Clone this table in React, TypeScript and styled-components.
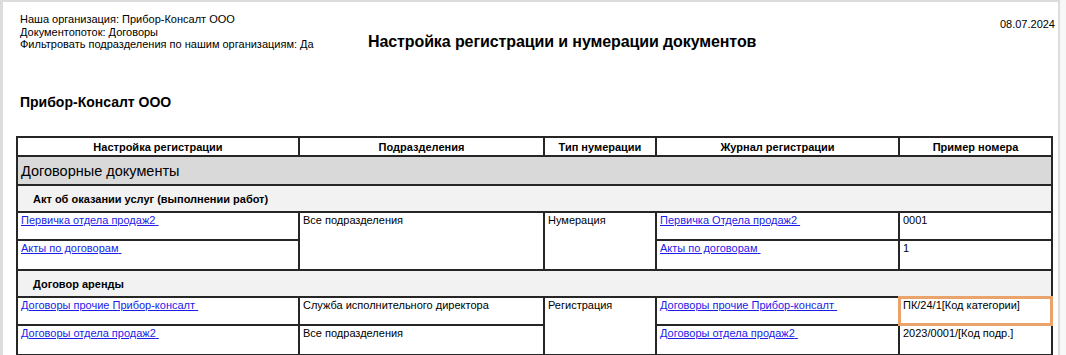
import React from "react";
import styled, { createGlobalStyle } from "styled-components";

const GlobalStyle = createGlobalStyle`
  html, body {
    margin: 0;
    padding: 0;
    background: #f7f7f7;
  }
  body {
    font-family: "Liberation Sans", Arial, sans-serif;
    color: #000;
  }
`;

type Entry = {
  setting: string;
  division?: string;
  divisionSpan?: number;
  numbering?: string;
  numberingSpan?: number;
  journal: string;
  sample: string;
  selected?: boolean;
};

type Group = {
  title: string;
  entries: Entry[];
};

const groups: Group[] = [
  {
    title: "Акт об оказании услуг (выполнении работ)",
    entries: [
      {
        setting: "Первичка отдела продаж2",
        division: "Все подразделения",
        divisionSpan: 2,
        numbering: "Нумерация",
        numberingSpan: 2,
        journal: "Первичка Отдела продаж2",
        sample: "0001",
      },
      {
        setting: "Акты по договорам",
        journal: "Акты по договорам",
        sample: "1",
      },
    ],
  },
  {
    title: "Договор аренды",
    entries: [
      {
        setting: "Договоры прочие Прибор-консалт",
        division: "Служба исполнительного директора",
        numbering: "Регистрация",
        numberingSpan: 2,
        journal: "Договоры прочие Прибор-консалт",
        sample: "ПК/24/1[Код категории]",
        selected: true,
      },
      {
        setting: "Договоры отдела продаж2",
        division: "Все подразделения",
        journal: "Договоры отдела продаж2",
        sample: "2023/0001/[Код подр.]",
      },
    ],
  },
];

const rowHeights = [28, 30];

const Sheet = styled.div`
  box-sizing: border-box;
  width: 1060px;
  height: 355px;
  background: #fff;
  border-top: 2px solid #dcdcdc;
  border-left: 3px solid #dcdcdc;
  border-right: 2px solid #dcdcdc;
  overflow: hidden;
`;

const TopBar = styled.div`
  display: flex;
  align-items: flex-start;
  padding: 11px 3px 0 17px;
`;

const Meta = styled.div`
  width: 348px;
  font-size: 11px;
  line-height: 12.5px;
`;

const Title = styled.h1`
  margin: 19px 0 0;
  font-size: 16px;
  font-weight: 700;
  line-height: 19px;
  letter-spacing: -0.1px;
`;

const DateLabel = styled.div`
  margin-left: auto;
  margin-top: 5px;
  font-size: 11px;
`;

const OrgName = styled.h2`
  margin: 43px 0 0 17px;
  font-size: 14px;
  font-weight: 700;
  line-height: 17px;
`;

const Table = styled.table`
  margin: 25px 0 0 13px;
  width: 1035px;
  border-collapse: collapse;
  table-layout: fixed;
  font-size: 11px;
`;

const Head = styled.th`
  height: 17px;
  padding: 0 4px;
  border: 2px solid #262626;
  font-weight: 700;
  text-align: center;
  vertical-align: middle;
`;

const SectionCell = styled.td`
  height: 27px;
  padding: 0 3px;
  border: 2px solid #262626;
  background: #d9d9d9;
  font-size: 14.5px;
  vertical-align: middle;
`;

const GroupCell = styled.td`
  height: 25px;
  padding: 0 15px;
  border: 2px solid #262626;
  background: #f2f2f2;
  font-weight: 700;
  vertical-align: middle;
`;

const Cell = styled.td<{ $thin?: boolean; $selected?: boolean }>`
  padding: 1px 3px 0;
  border: 2px solid #262626;
  border-bottom: ${(p) => (p.$thin ? "1px solid #9a9a9a" : "2px solid #262626")};
  vertical-align: top;
  line-height: 13px;
  white-space: nowrap;
  overflow: hidden;
  ${(p) =>
    p.$selected &&
    `
    outline: 3px solid #eaa36a;
    outline-offset: -2px;
  `}
`;

const Link = styled.a`
  color: #1c1ce8;
  text-decoration: underline;
  cursor: pointer;
`;

export default function App() {
  return (
    <>
      <GlobalStyle />
      <Sheet>
        <TopBar>
          <Meta>
            <div>Наша организация: Прибор-Консалт ООО</div>
            <div>Документопоток: Договоры</div>
            <div>Фильтровать подразделения по нашим организациям: Да</div>
          </Meta>
          <Title>Настройка регистрации и нумерации документов</Title>
          <DateLabel>08.07.2024</DateLabel>
        </TopBar>
        <OrgName>Прибор-Консалт ООО</OrgName>
        <Table>
          <colgroup>
            <col style={{ width: 282 }} />
            <col style={{ width: 245 }} />
            <col style={{ width: 112 }} />
            <col style={{ width: 243 }} />
            <col style={{ width: 153 }} />
          </colgroup>
          <thead>
            <tr>
              <Head>Настройка регистрации</Head>
              <Head>Подразделения</Head>
              <Head>Тип нумерации</Head>
              <Head>Журнал регистрации</Head>
              <Head>Пример номера</Head>
            </tr>
          </thead>
          <tbody>
            <tr>
              <SectionCell colSpan={5}>Договорные документы</SectionCell>
            </tr>
            {groups.map((group) => (
              <React.Fragment key={group.title}>
                <tr>
                  <GroupCell colSpan={5}>{group.title}</GroupCell>
                </tr>
                {group.entries.map((e, i) => {
                  const thin = i < group.entries.length - 1;
                  return (
                    <tr key={e.setting} style={{ height: rowHeights[i] }}>
                      <Cell $thin={thin}>
                        <Link>{e.setting}&nbsp;</Link>
                      </Cell>
                      {e.division !== undefined && (
                        <Cell $thin={thin && !e.divisionSpan} rowSpan={e.divisionSpan}>
                          {e.division}
                        </Cell>
                      )}
                      {e.numbering !== undefined && (
                        <Cell rowSpan={e.numberingSpan}>{e.numbering}</Cell>
                      )}
                      <Cell $thin={thin}>
                        <Link>{e.journal}&nbsp;</Link>
                      </Cell>
                      <Cell $thin={thin && !e.selected} $selected={e.selected}>
                        {e.sample}
                      </Cell>
                    </tr>
                  );
                })}
              </React.Fragment>
            ))}
          </tbody>
        </Table>
      </Sheet>
    </>
  );
}
